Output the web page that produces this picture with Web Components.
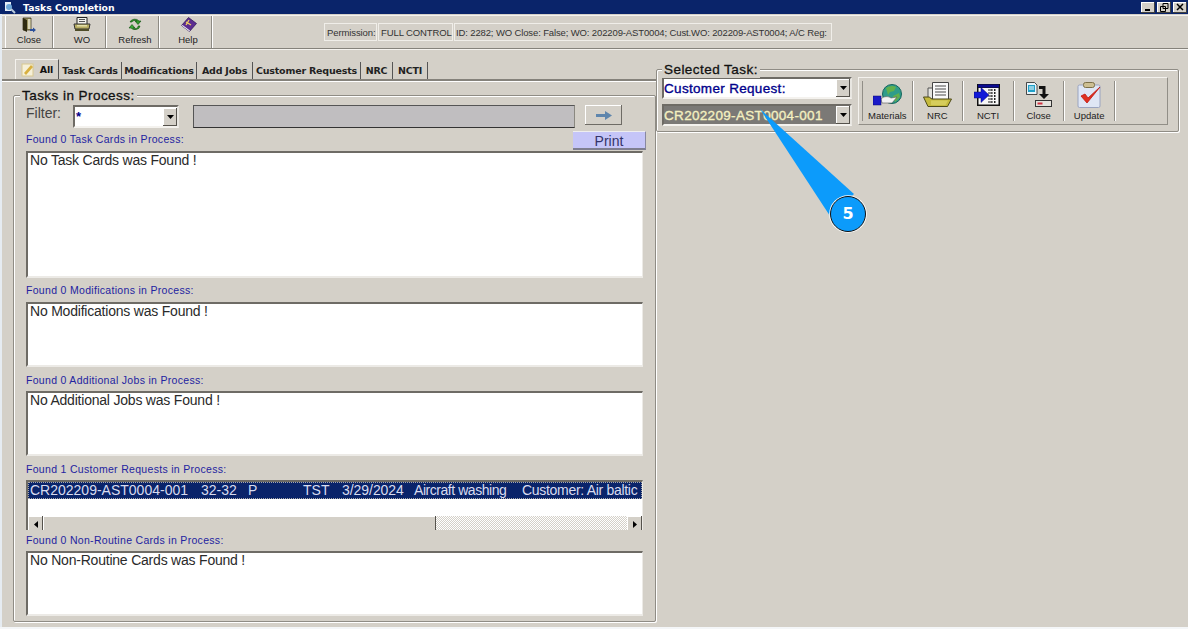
<!DOCTYPE html>
<html><head><meta charset="utf-8"><style>
html,body{margin:0;padding:0;background:#f4f6f8;overflow:hidden}
body{width:1188px;height:629px;font-family:"Liberation Sans",Arial,sans-serif}
</style></head><body>
<app-window></app-window>
<script>
const icons={
close:`<svg width="16" height="16" viewBox="0 0 16 16"><path d="M2 1h8v12H2z" fill="#9c9460" stroke="#2e2a10" stroke-width=".7"/><path d="M2 1l4 2v12l-4-2z" fill="#2e2a10"/><path d="M7 2h2.500v10H7z" fill="#d8d4b8"/><path d="M9 12h3v-1.500l3 2.500-3 2.500V14H9z" fill="#2a4f9a"/></svg>`,
wo:`<svg width="18" height="15" viewBox="0 0 18 15"><path d="M4 .5h10v7H4z" fill="#f4f4ee" stroke="#222"/><path d="M6 2.500h6M6 4.500h6" stroke="#555"/><path d="M1 7h16l-1 5H2z" fill="#b8ae62" stroke="#333"/><path d="M2 12h14v2H2z" fill="#4e4c28"/><path d="M4 8h10v1.500H4z" fill="#e3dfa8"/></svg>`,
refresh:`<svg width="14" height="15" viewBox="0 0 14 15"><path d="M2 5a5 4 0 0 1 9-1l2 0-3 3.500L7 4h2a3 2 0 0 0-5 1z" fill="#2f9a2c" stroke="#0c4a0c" stroke-width=".6"/><path d="M12 9a5 4 0 0 1-9 2L1 11l3-3.500L7 11H5a3 2 0 0 0 5-2z" fill="#39a836" stroke="#0c4a0c" stroke-width=".6"/></svg>`,
help:`<svg width="17" height="15" viewBox="0 0 17 15"><path d="M8.500 .5l8 6-7 8-8-6z" fill="#5c2d91" stroke="#2a1050" stroke-width=".7"/><path d="M1.500 8.500l8 6 .5-1-7.500-5.500z" fill="#e8e8f0"/><path d="M6 5l5 3M6 8l3-5" stroke="#f0d060" stroke-width="1.300"/></svg>`,
materials:`<svg width="29" height="22" viewBox="0 0 29 22"><circle cx="19" cy="10" r="9.500" fill="#2f9c8a"/><path d="M13 4c3-2 7-3 10-1l-2 4-4 1-2 3zM20 12l6-3 1 4-5 5z" fill="#62b04c"/><circle cx="19" cy="10" r="9.500" fill="none" stroke="#14655c"/><path d="M8 15c3-3 7-3 10-1l6-1-5 6H9z" fill="#f2f2f2" stroke="#555" stroke-width=".6"/><rect x="0" y="12" width="8" height="9" fill="#1a1ac8" stroke="#0a0a70" stroke-width=".5"/></svg>`,
nrc:`<svg width="29" height="25" viewBox="0 0 29 25"><path d="M5 6h6v11H5z" fill="#e4e4e0" stroke="#555"/><path d="M9.500.5h16v18h-16z" fill="#fafafa" stroke="#444"/><path d="M12 4h11M12 7h11M12 10h11M12 13h11" stroke="#4a4a4a"/><path d="M.5 15h6l2 2h20l-4 7.500H5z" fill="#c6bb3e" stroke="#4d4a18"/><path d="M8 18.500h17l-2.500 4.500H8z" fill="#d6cd5c"/></svg>`,
ncti:`<svg width="27" height="24" viewBox="0 0 27 24"><rect x="3" y="1" width="23" height="22" fill="#111"/><rect x="4.500" y="5" width="20" height="16.500" fill="#f6f6f6"/><rect x="4" y="1.500" width="21" height="3" fill="#0a0a90"/><path d="M14 7h9M14 10h9M14 13h9M14 16h9M14 19h9M17 6v15M20.500 6v15" stroke="#222" stroke-dasharray="2 1"/><path d="M0 9h7V4.500l8 7.500-8 7.500V15H0z" fill="#1018d8" stroke="#08086a" stroke-width=".5"/></svg>`,
closeTask:`<svg width="26" height="25" viewBox="0 0 26 25"><path d="M.5.500h8l2.500 2.500v9.500H.5z" fill="#e8f4fa" stroke="#222" stroke-width=".8"/><path d="M2 3h7v7H2z" fill="#20a0c8"/><path d="M3 5h5M3 7h5" stroke="#fff"/><path d="M13 4h6.500v8H23l-5 5-5-5h3.500V7H13z" fill="#111"/><rect x="9.500" y="18.500" width="16" height="6" fill="#e4e2dc" stroke="#333"/><rect x="11.500" y="20.500" width="5" height="2" fill="#d03040"/></svg>`,
update:`<svg width="24" height="26" viewBox="0 0 24 26"><rect x="1" y="3" width="22" height="22.500" rx="1.500" fill="#dfe6f5" stroke="#9aa4c0"/><rect x="6.500" y=".5" width="11" height="5" rx="2" fill="#cdbf92" stroke="#7c7048"/><path d="M4 14l6 7L23 5 11 16l-3-4z" fill="#e03020" stroke="#c01810" stroke-width=".8"/></svg>`};

function def(name,css,html){customElements.define(name,class extends HTMLElement{connectedCallback(){if(this.shadowRoot)return;const r=this.attachShadow({mode:'open'});r.innerHTML=`<style>${css}</style>`+(typeof html==='function'?html(this):html);}});}

def('title-bar',`:host{display:flex;align-items:center;height:14px;background:#0a246a;color:#fff;font:bold 9.300px "DejaVu Sans",sans-serif;flex:none;margin-left:-2px;padding-left:2px}
.t{margin-left:7px}.ic{margin-left:1px;display:flex}
.b{margin-left:auto;display:flex;margin-right:1px}
.btn{width:14px;height:11px;margin-left:2px;background:#d4d0c8;box-shadow:inset -1px -1px #404040,inset 1px 1px #fff;display:flex;align-items:center;justify-content:center}`,
`<span class="ic"><svg width="13" height="13" viewBox="0 0 13 13"><path d="M2 1h6v9H2z" fill="#e6eef6"/><circle cx="6" cy="6" r="3" fill="#6fa8d8"/><path d="M8 8l4 4" stroke="#bcd" stroke-width="2"/></svg></span><span class="t">Tasks Completion</span>
<span class="b"><span class="btn"><svg width="8" height="8"><path d="M1 6h5v2H1z"/></svg></span><span class="btn"><svg width="9" height="9"><path d="M3 .5h5v5H3zM.5 3.500h5v5h-5z" fill="#d4d0c8" stroke="#000"/></svg></span><span class="btn"><svg width="8" height="8"><path d="M1 1l6 6M7 1l-6 6" stroke="#000" stroke-width="1.500"/></svg></span></span>`);

def('tool-btn',`:host{display:flex;flex-direction:column;align-items:center;flex:none;box-sizing:border-box;color:#222;font:var(--f,9.500px "Liberation Sans",sans-serif)}
.i{height:var(--ih,15px);display:flex;align-items:center;justify-content:center}.l{white-space:nowrap;margin-top:var(--lm,2px)}`,
h=>`<span class="i">${icons[h.getAttribute('icon')]}</span><span class="l"><slot></slot></span>`);

def('top-bar',`:host{display:flex;height:34px;flex:none;box-sizing:border-box;margin-top:1px;border-top:1px solid #f4f2ee;border-bottom:1px solid #85827b;box-shadow:0 1px #f4f2ee;align-items:stretch}
.bs{display:flex;margin-left:3px;border-left:1px solid #fff}
.bs ::slotted(tool-btn){width:47px;padding-top:1px;border-right:1px solid #8d8a83;margin-right:6px;box-shadow:1px 0 #fff}
.st{display:flex;margin-left:106px;align-items:center;font:9.500px "Liberation Sans",sans-serif;letter-spacing:-.1px;color:#333}
.p{height:18px;display:flex;align-items:center;box-sizing:border-box;border:1px solid #f0eee9;white-space:nowrap;overflow:hidden;padding-left:2px}`,
`<div class="bs"><slot></slot></div><div class="st"><span class="p" style="width:53px">Permission:</span><span class="p" style="width:75px;margin-left:1px;padding-left:2px">FULL CONTROL</span><span class="p" style="width:378px;margin-left:1px;padding-left:1px;letter-spacing:-.13px">ID: 2282; WO Close: False; WO: 202209-AST0004; Cust.WO: 202209-AST0004; A/C Reg:</span></div>`);

def('tab-strip',`:host{display:flex;height:21px;box-sizing:border-box;padding-left:13px;border-bottom:2px solid #85827b;margin-top:11px;box-shadow:0 1px #fff;align-items:flex-end;flex:none}
.t{font:bold 9.500px "DejaVu Sans",sans-serif;letter-spacing:-.2px;color:#222;height:17px;display:flex;align-items:center;justify-content:center;box-sizing:border-box;border-right:1px solid #555;white-space:nowrap}
.a{height:20px;width:44px;border:1px solid #f4f2ee;border-bottom:0;border-right:1px solid #555;gap:5px;color:#111}`,
`<span class="t a"><svg width="14" height="14" viewBox="0 0 14 14"><rect x="1" y="1" width="11" height="12" fill="#f6f0d8" stroke="#d8c890"/><path d="M3 10l7-8 2 2-7 8z" fill="#d8b040"/></svg>All</span><span class="t" style="width:63px">Task Cards</span><span class="t" style="width:75px">Modifications</span><span class="t" style="width:56px">Add Jobs</span><span class="t" style="width:108px">Customer Requests</span><span class="t" style="width:32px">NRC</span><span class="t" style="width:35px">NCTI</span>`);

def('group-box',`:host{display:block;box-sizing:border-box;border:1px solid #8f8c85;box-shadow:inset 1px 1px #fff,1px 1px #fff;position:relative;border-radius:2px}
.lg{position:absolute;left:var(--lx,6px);top:-8px;background:#d4d0c8;padding:0 2px;font:13.500px "Liberation Sans",sans-serif;-webkit-text-stroke:.3px #111;letter-spacing:.45px;color:#111;line-height:16px;white-space:nowrap}`,
h=>`<span class="lg">${h.getAttribute('legend')}</span><slot></slot>`);

def('combo-box',`:host{display:flex;box-sizing:border-box;height:22px;border:2px solid #6e6b65;border-right-color:#e8e6e1;border-bottom-color:#f4f2ee;background:var(--bg,#fff);color:var(--fg,#00008b);font:var(--font,13.500px "Liberation Sans",sans-serif);letter-spacing:var(--ls,0);align-items:center}
.v{flex:1;padding-left:var(--pl,1px);white-space:nowrap;overflow:hidden}
.a{width:14px;height:18px;background:#d4d0c8;box-shadow:inset -1px -1px #55524c,inset 1px 1px #fff;display:flex;align-items:center;justify-content:center;flex:none}`,
`<span class="v"><slot></slot></span><span class="a"><svg width="7" height="4"><path d="M0 0h7L3.500 4z" fill="#000"/></svg></span>`);

def('task-list',`:host{display:block;flex:none;box-sizing:border-box;margin-left:12px;width:617px;background:#fff;border-top:2px solid #6e6b65;border-left:2px solid #6e6b65;border-right:1px solid #eceae6;border-bottom:2px solid #eceae6;font:14px "Liberation Sans",sans-serif;letter-spacing:-.21px;color:#2a2a2a;overflow:hidden;line-height:14px;padding:0 0 0 2px}`,`<slot></slot>`);

def('list-label',`:host{display:block;flex:none;margin-left:12px;font:10.500px "Liberation Sans",sans-serif;letter-spacing:.31px;color:#2323a0;line-height:12px;white-space:nowrap}`,`<slot></slot>`);

def('h-scroll',`:host{display:flex;height:16px;background:repeating-conic-gradient(#d4d0c8 0 25%,#fff 0 50%) 0 0/2px 2px;margin-left:-2px}
.b{width:15px;background:#d4d0c8;box-shadow:inset -1px -1px #55524c,inset 1px 1px #fff;display:flex;align-items:center;justify-content:center;flex:none}
.th{width:393px;background:#d4d0c8;box-shadow:inset -1px -1px #55524c,inset 1px 1px #fff;flex:none}.g{flex:1}`,
`<span class="b"><svg width="4" height="7"><path d="M4 0v7L0 3.500z"/></svg></span><span class="th"></span><span class="g"></span><span class="b"><svg width="4" height="7"><path d="M0 0v7L4 3.500z"/></svg></span>`);

def('call-out',`:host{position:absolute;left:746px;top:101px;width:125px;height:140px}svg{position:absolute;inset:0}
.n{position:absolute;left:82px;top:101px;width:36px;height:24px;text-align:center;color:#fff;font:bold 16px/24px "DejaVu Sans",sans-serif}`,
`<svg width="125" height="140"><path d="M12 8L106 93 82 115z" fill="#0c9bfb"/><circle cx="100" cy="113" r="18.800" fill="#fff"/><circle cx="100" cy="113" r="17.500" fill="#0c9bfb" stroke="#111" stroke-width="1"/></svg><span class="n">5</span>`);

def('app-window',`:host{display:flex;flex-direction:column;width:1188px;height:627px;background:#d4d0c8;box-sizing:border-box;border-left:2px solid #e6ecf2;position:relative}
.main{display:flex;flex:1;min-height:0;align-items:flex-start}
.left{width:654px;flex:none;display:flex;flex-direction:column;height:100%}
.lgb{margin:14px 0 5px 11px;flex:1;display:flex;flex-direction:column}
.inner{display:flex;flex-direction:column;height:100%;padding-top:9px;box-sizing:border-box}
.filter{display:flex;align-items:flex-start;height:26px;margin-left:12px;flex:none;font:14px "Liberation Sans",sans-serif;color:#444}
.fl{width:47px;line-height:16px}
.gray{width:382px;margin-left:14px;height:23px;background:#c0bec0;box-sizing:border-box;border:1px solid #555;border-right-color:#8a8880;border-bottom-color:#333}
.go{width:37px;height:20px;margin-left:10px;background:#d4d0c8;box-shadow:inset -1px -1px #6e6b65,inset 1px 1px #fff;display:flex;align-items:center;justify-content:center}
.lr{display:flex;height:20px;flex:none;justify-content:space-between}
.lr list-label{margin-top:2px}
.pr{width:73px;height:19px;margin-right:9px;box-sizing:border-box;background:#c5c5f8;border-bottom:2px solid #7e7e90;border-right:1px solid #8888a0;border-top:1px solid #eee;text-align:center;font:14px/18px "Liberation Sans",sans-serif;color:#33336a}
.sel{display:flex;background:#0a246a;color:#d8dcf0;height:17px;line-height:17px;white-space:nowrap;overflow:hidden;margin-left:-2px;padding-left:2px;outline:1px dotted #a8a8a8;outline-offset:-1px;letter-spacing:0}
.sel span{flex:none}
.right{margin:20px 9px 0 0;flex:1;height:63px;--lx:5px}
.rb{display:flex;height:59px;box-sizing:border-box;padding:7px 0 0 5px;gap:6px}
.combos{width:190px;display:flex;flex-direction:column;gap:5px;flex:none;--pl:0px}
.combos combo-box{-webkit-text-stroke:.35px currentColor}
.tools{width:310px;flex:none;height:48px;box-sizing:border-box;display:flex;padding:3px 0 3px 3px;border:1px solid #f4f2ee;border-right-color:#918e87;border-bottom-color:#918e87}
.tools tool-btn{width:50.600px;border-right:1px solid #918e87;box-shadow:1px 0 #fff;--ih:27px;--lm:2px}
.tools tool-btn:first-child{border-left:1px solid #918e87}`,
`<title-bar></title-bar>
<top-bar><tool-btn icon="close">Close</tool-btn><tool-btn icon="wo">WO</tool-btn><tool-btn icon="refresh">Refresh</tool-btn><tool-btn icon="help">Help</tool-btn></top-bar>
<div class="main">
 <div class="left">
  <tab-strip></tab-strip>
  <group-box class="lgb" legend="Tasks in Process:"><div class="inner">
   <div class="filter"><span class="fl">Filter:</span><combo-box style="width:106px;height:23px;--font:bold 13px 'Liberation Sans',sans-serif">*</combo-box><span class="gray"></span><span class="go"><svg width="16" height="9" viewBox="0 0 16 9"><path d="M0 3h9V0l7 4.500L9 9V6H0z" fill="#5f86ad"/></svg></span></div>
   <div class="lr"><list-label>Found 0 Task Cards in Process:</list-label><span class="pr">Print</span></div>
   <task-list style="height:127px">No Task Cards was Found !</task-list>
   <list-label style="margin-top:6px">Found 0 Modifications in Process:</list-label>
   <task-list style="height:65px;margin-top:6px">No Modifications was Found !</task-list>
   <list-label style="margin-top:7px">Found 0 Additional Jobs in Process:</list-label>
   <task-list style="height:65px;margin-top:5px">No Additional Jobs was Found !</task-list>
   <list-label style="margin-top:7px">Found 1 Customer Requests in Process:</list-label>
   <task-list style="height:50px;margin-top:5px;border-bottom:0"><div class="sel"><span style="width:171px">CR202209-AST0004-001</span><span style="width:47px">32-32</span><span style="width:55px">P</span><span style="width:39px">TST</span><span style="width:72px;letter-spacing:-.05px">3/29/2024</span><span style="width:108px;letter-spacing:-.45px">Aircraft washing</span><span style="letter-spacing:-.3px">Customer: Air baltic</span></div><div style="height:17px"></div><h-scroll></h-scroll></task-list>
   <list-label style="margin-top:4px">Found 0 Non-Routine Cards in Process:</list-label>
   <task-list style="height:65px;margin-top:5px">No Non-Routine Cards was Found !</task-list>
  </div></group-box>
 </div>
 <group-box class="right" legend="Selected Task:"><div class="rb">
  <div class="combos"><combo-box style="--ls:.32px">Customer Request:</combo-box><combo-box style="--bg:#7b7976;--fg:#f4f0c0;--ls:.32px">CR202209-AST0004-001</combo-box></div>
  <div class="tools"><tool-btn icon="materials">Materials</tool-btn><tool-btn icon="nrc">NRC</tool-btn><tool-btn icon="ncti">NCTI</tool-btn><tool-btn icon="closeTask">Close</tool-btn><tool-btn icon="update">Update</tool-btn></div>
 </div></group-box>
</div>
<call-out></call-out>`);
</script>
</body></html>
